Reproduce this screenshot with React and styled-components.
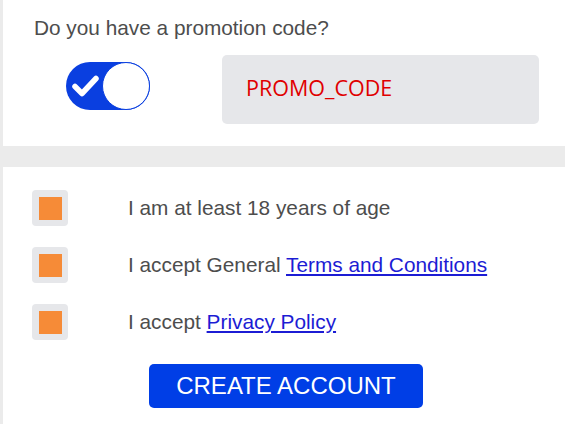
import styled, { createGlobalStyle } from 'styled-components';

const GlobalStyle = createGlobalStyle`
  body {
    margin: 0;
    background: #ebebeb;
    font-family: "Liberation Sans", Arial, sans-serif;
  }
`;

const Page = styled.div`
  padding-left: 3px;
  height: 424px;
  overflow: hidden;
`;

const Card = styled.section`
  background: #ffffff;
`;

const PromoCard = styled(Card)`
  height: 146px;
  padding: 16px 0 0 31px;
  box-sizing: border-box;
`;

const Question = styled.p`
  margin: 0;
  font-size: 20.8px;
  line-height: 24px;
  color: #4d4d4d;
`;

const PromoRow = styled.div`
  display: flex;
  align-items: flex-start;
  margin-top: 15px;
`;

const Toggle = styled.div`
  position: relative;
  width: 84px;
  height: 48px;
  margin: 7px 0 0 32px;
  border-radius: 24px;
  background: #0a3fe0;
  flex-shrink: 0;

  svg {
    position: absolute;
    left: 5px;
    top: 11px;
  }
`;

const Knob = styled.span`
  position: absolute;
  right: 0;
  top: 0;
  width: 46px;
  height: 46px;
  border-radius: 50%;
  background: #ffffff;
  border: 1px solid #0a3fe0;
`;

const CodeField = styled.div`
  display: flex;
  align-items: center;
  width: 317px;
  height: 69px;
  margin-left: 72px;
  padding: 0 0 5px 24px;
  box-sizing: border-box;
  border-radius: 5px;
  background: #e6e7ea;
  font-family: "Open Sans", sans-serif;
  font-size: 21.5px;
  color: #e00000;
`;

const TermsCard = styled(Card)`
  margin-top: 21px;
  height: 300px;
  padding: 23px 0 0 29px;
  box-sizing: border-box;
`;

const Rows = styled.div`
  display: flex;
  flex-direction: column;
  gap: 21px;
`;

const Row = styled.label`
  display: flex;
  align-items: center;
  gap: 60px;
  height: 36px;
  font-size: 20.8px;
  color: #4d4d4d;
`;

const Box = styled.span`
  display: flex;
  align-items: center;
  justify-content: center;
  width: 36px;
  height: 36px;
  border-radius: 4px;
  background: #e6e7ea;
  flex-shrink: 0;

  &::after {
    content: '';
    width: 23px;
    height: 23px;
    background: #f68b37;
  }
`;

const Link = styled.a`
  color: #1c1cd4;
  text-decoration: underline;
`;

const Actions = styled.div`
  display: flex;
  justify-content: center;
  margin-top: 24px;
  padding-right: 25px;
`;

const CreateButton = styled.button`
  width: 274px;
  height: 44px;
  border: none;
  border-radius: 5px;
  background: #003ee6;
  color: #ffffff;
  font-family: "Liberation Sans", Arial, sans-serif;
  font-size: 24px;
  padding: 0;
`;

function App() {
  return (
    <Page>
      <GlobalStyle />
      <PromoCard>
        <Question>Do you have a promotion code?</Question>
        <PromoRow>
          <Toggle>
            <svg width="30" height="26" viewBox="0 0 30 26">
              <path
                d="M4 13.5 L11 20.5 L25 5.5"
                fill="none"
                stroke="#ffffff"
                strokeWidth="5.5"
                strokeLinecap="round"
                strokeLinejoin="round"
              />
            </svg>
            <Knob />
          </Toggle>
          <CodeField>PROMO_CODE</CodeField>
        </PromoRow>
      </PromoCard>
      <TermsCard>
        <Rows>
          <Row>
            <Box />
            <span>I am at least 18 years of age</span>
          </Row>
          <Row>
            <Box />
            <span>
              I accept General <Link href="#">Terms and Conditions</Link>
            </span>
          </Row>
          <Row>
            <Box />
            <span>
              I accept <Link href="#">Privacy Policy</Link>
            </span>
          </Row>
        </Rows>
        <Actions>
          <CreateButton>CREATE ACCOUNT</CreateButton>
        </Actions>
      </TermsCard>
    </Page>
  );
}

export default App;
